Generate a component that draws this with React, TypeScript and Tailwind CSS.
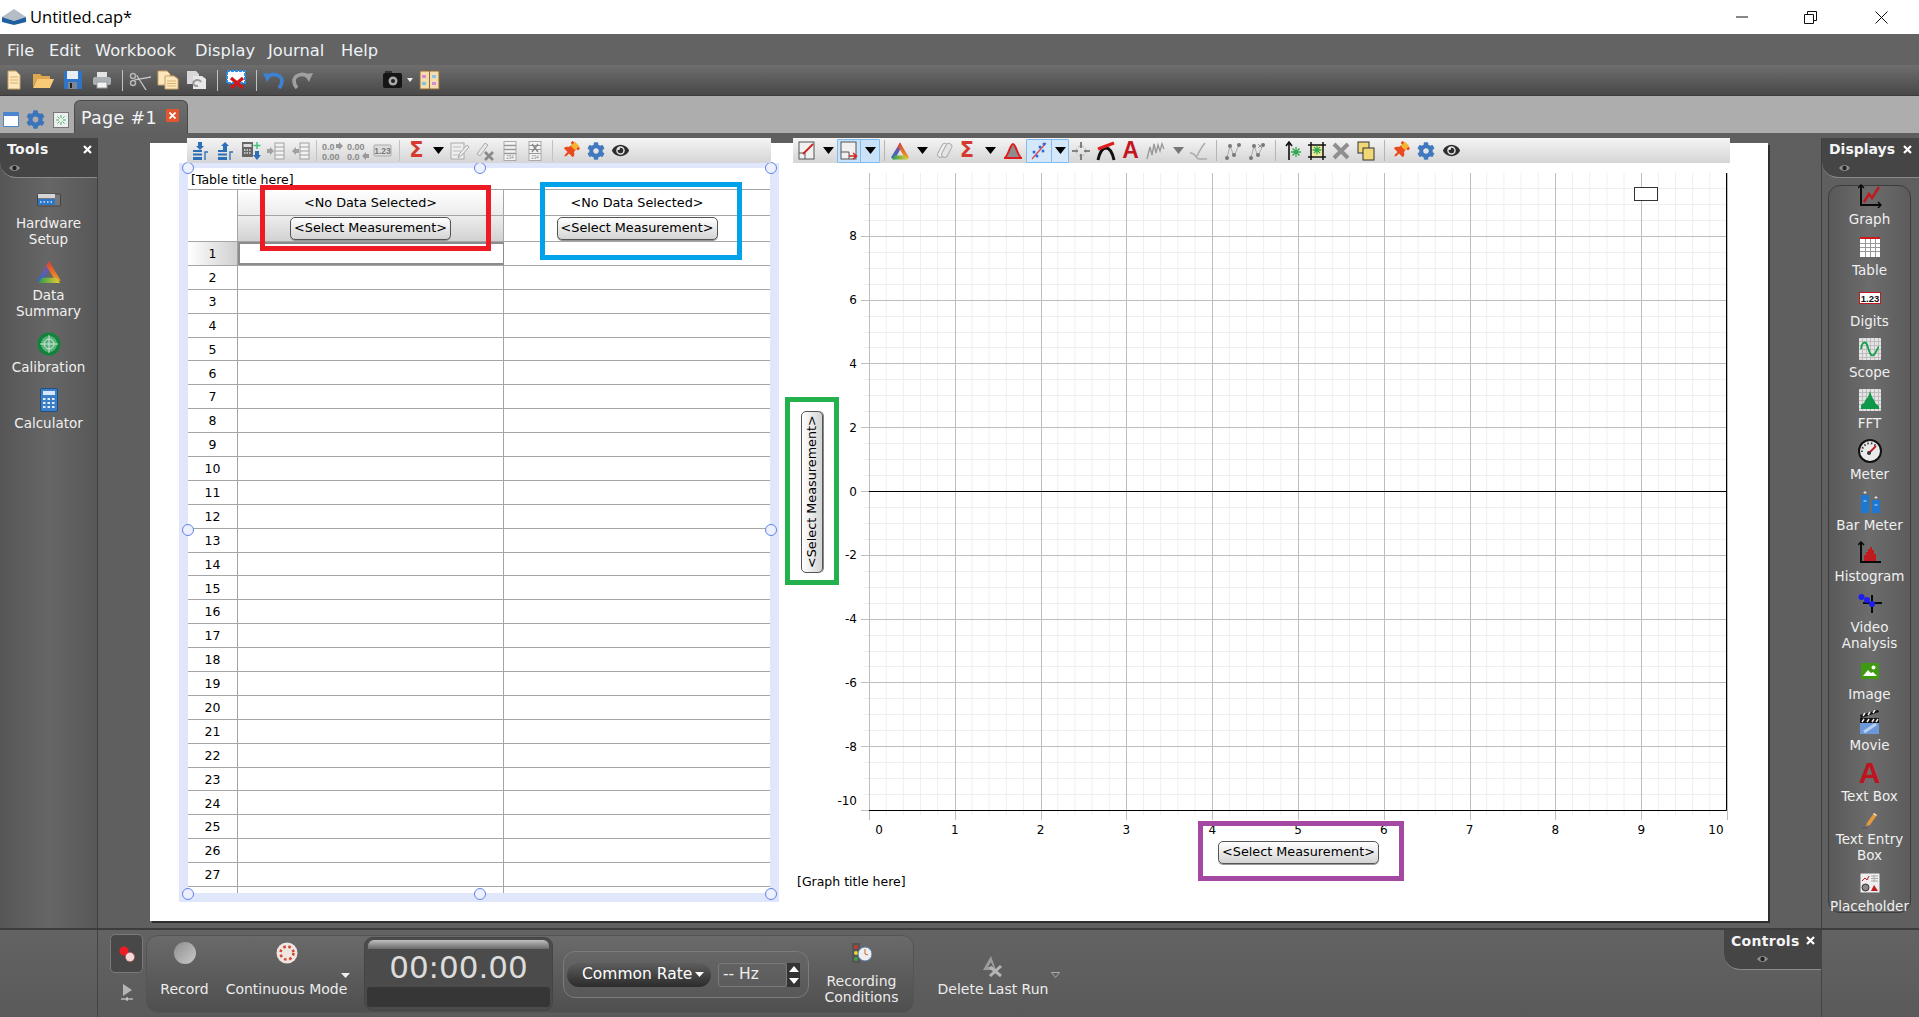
import React from "react";
import { FaCog, FaThumbtack, FaEye } from "react-icons/fa";

const ui = "font-['DejaVu_Sans',sans-serif]";

function Sv({ w = 20, h = 20, children }: { w?: number; h?: number; children?: React.ReactNode }) {
  return (
    <svg width={w} height={h} viewBox={`0 0 ${w} ${h}`} className="block shrink-0">
      {children}
    </svg>
  );
}

function Cell({ w, children, cls = "" }: { w: string; children?: React.ReactNode; cls?: string }) {
  return <div className={`flex h-full shrink-0 items-center justify-center ${w} ${cls}`}>{children}</div>;
}

const Sep = ({ w, dark }: { w: string; dark?: boolean }) => (
  <div className={`flex h-full shrink-0 items-center justify-center ${w}`}>
    <div className={`h-[21px] w-px ${dark ? "bg-[#b5b5b5]" : "bg-[#c2c2c2]"}`} />
  </div>
);

const Tri = ({ c = "#000", w = 11, h = 7 }: { c?: string; w?: number; h?: number }) => (
  <svg width={w} height={h} viewBox={`0 0 ${w} ${h}`} className="block shrink-0">
    <path d={`M0 0H${w}L${w / 2} ${h}Z`} fill={c} />
  </svg>
);

/* ---------- main toolbar icons ---------- */
const DocI = () => (
  <Sv>
    <path d="M4 1h8l4 4v14H4z" fill="#fde6ba" stroke="#c7a36a" />
    <path d="M6 7h8M6 10h8M6 13h8" stroke="#d9b071" />
  </Sv>
);
const FolderI = () => (
  <Sv w={23}>
    <path d="M1 4h7l2 2h8v3H5L1 17z" fill="#e0a84e" />
    <path d="M5 9h17l-4 9H1z" fill="#f9ca75" />
  </Sv>
);
const SaveI = () => (
  <Sv>
    <rect x="1" y="1" width="18" height="18" rx="1" fill="#2f74c6" />
    <rect x="4" y="1" width="11" height="8" fill="#e8eef6" />
    <rect x="5" y="12" width="9" height="7" fill="#7d8794" />
    <rect x="7" y="13" width="2" height="5" fill="#222" />
  </Sv>
);
const PrinterI = () => (
  <Sv>
    <rect x="5" y="2" width="10" height="6" fill="#e4e4e4" />
    <rect x="1" y="7" width="18" height="8" rx="2" fill="#aab0b6" />
    <rect x="5" y="12" width="10" height="6" fill="#f3f3f3" stroke="#999" />
  </Sv>
);
const ScissorsI = () => (
  <Sv w={22}>
    <circle cx="4" cy="6" r="2.500" fill="none" stroke="#b5b5b5" strokeWidth="1.500" />
    <circle cx="4" cy="13" r="2.500" fill="none" stroke="#b5b5b5" strokeWidth="1.500" />
    <path d="M6 7l15 10M6 12L21 2" stroke="#c5c5c5" strokeWidth="1.300" transform="rotate(24 11 10)" />
  </Sv>
);
const CopyI = () => (
  <Sv w={22}>
    <path d="M1 1h9l3 3v11H1z" fill="#fde6ba" stroke="#c7a36a" />
    <path d="M8 6h9l4 3v10H8z" fill="#fde6ba" stroke="#c7a36a" />
    <path d="M10 11h9M10 13.500h9M10 16h9" stroke="#d9b071" />
  </Sv>
);
const PasteI = () => (
  <Sv w={22}>
    <path d="M1 1h9l3 3v10H1z" fill="#d8d8d8" />
    <path d="M7 6h9l4 3v10H7z" fill="#e8e8e8" />
    <path d="M15 12a4 3 0 1 0-3 4" fill="none" stroke="#999" strokeWidth="2" />
  </Sv>
);
const DelChartI = () => (
  <Sv w={21}>
    <rect x="1" y="1" width="18" height="12" fill="#fff" stroke="#2a8ee8" strokeWidth="2" strokeDasharray="3 1" />
    <path d="M5 8l12 10M17 8L5 18" stroke="#d0181c" strokeWidth="3.400" />
  </Sv>
);
const UndoI = ({ c = "#3f82d4", flip = false }: { c?: string; flip?: boolean }) => (
  <Sv w={21}>
    <g transform={flip ? "translate(21 0) scale(-1 1)" : undefined}>
      <path d="M5 7a8 7 0 0 1 14 3c0 3-1 6-3 8" fill="none" stroke={c} strokeWidth="3.600" />
      <path d="M0 3l9 1-5 8z" fill={c} />
    </g>
  </Sv>
);
const CameraI = () => (
  <Sv w={21}>
    <rect x="3" y="1" width="7" height="4" fill="#333" />
    <rect x="1" y="3" width="19" height="15" rx="2" fill="#151515" />
    <circle cx="11" cy="11" r="4.500" fill="#a8a8a8" />
    <circle cx="11" cy="11" r="2" fill="#222" />
  </Sv>
);
const BookI = () => (
  <Sv w={21}>
    <rect x="1" y="1" width="19" height="18" fill="#f3dcae" stroke="#8d6a38" />
    <path d="M10.500 1v18" stroke="#8d6a38" />
    <rect x="3" y="5" width="4" height="3" fill="#d98ad0" />
    <rect x="13" y="5" width="4" height="3" fill="#8fc4e8" />
    <rect x="3" y="12" width="4" height="3" fill="#7cc4d8" />
    <rect x="13" y="12" width="4" height="3" fill="#d98ad0" />
  </Sv>
);

/* ---------- table toolbar icons ---------- */
const ColAdd = ({ up = false }: { up?: boolean }) => {
  const c = "#2a6fb8";
  return (
    <Sv>
      <g transform="translate(-1 0)">
        <path d={up ? "M10 1l4 4h-2v4H8V5H6z" : "M8 1h4v4h2l-4 4-4-4h2z"} fill={c} />
        <rect x="3" y="9" width="9" height="2" fill={c} />
        <rect x="3" y="12.500" width="9" height="2" fill={c} />
        <rect x="3" y="16" width="9" height="3" fill={c} />
        <path d="M15 19v-8h3" fill="none" stroke={c} strokeWidth="1.300" />
      </g>
    </Sv>
  );
};
const CalcAdd = () => (
  <Sv>
    <rect x="1" y="1" width="11" height="15" fill="#666" />
    <rect x="2.500" y="3" width="8" height="3" fill="#ddd" />
    <path d="M3 9h7M3 12h7" stroke="#ddd" strokeDasharray="1.500 1" strokeWidth="1.600" />
    <path d="M16 1v7M12.500 4.500h7" stroke="#3fc47a" strokeWidth="1.500" />
    <path d="M14 10h4v4h2l-4 5-4-5h2z" fill="#2a6fb8" />
  </Sv>
);
const RowMove = ({ left = false }: { left?: boolean }) => (
  <Sv>
    <rect x="9" y="2" width="9" height="16" fill="#f2f2f2" stroke="#a0a0a0" />
    <path d="M9 6h9M9 10h9M9 14h9" stroke="#a0a0a0" />
    <path d={left ? "M1 10l4-4v2h3v4H5v2z" : "M8 10L4 6v2H1v4h3v2z"} fill="#a0a0a0" />
  </Sv>
);
const Dec = ({ a, b, arrow }: { a: string; b: string; arrow: "r" | "l" }) => (
  <Sv w={24}>
    <text x="1" y="9" fontSize="9" fontWeight="700" fill="#8a8a8a" fontFamily="Liberation Sans, sans-serif">{a}</text>
    <text x="1" y="19" fontSize="9" fontWeight="700" fill="#8a8a8a" fontFamily="Liberation Sans, sans-serif">{b}</text>
    <path d={arrow === "r" ? "M15 2v4h3v2l4-4-4-4v2z" : "M23 12v4h-3v2l-4-4 4-4v2z"} fill="#999" transform="translate(0 1)" />
  </Sv>
);
const Num123 = () => (
  <Sv w={19}>
    <rect x="1" y="4" width="17" height="11" rx="1" fill="#ddd" stroke="#aaa" />
    <text x="9.500" y="13" textAnchor="middle" fontSize="8.500" fontWeight="700" fill="#777" fontFamily="Liberation Sans, sans-serif">1.23</text>
  </Sv>
);
const Sigma = ({ size = "text-[21px]" }: { size?: string }) => (
  <span className={`font-['DejaVu_Sans',sans-serif] font-bold leading-none text-[#d33a30] ${size}`}>Σ</span>
);
const EditI = () => (
  <Sv>
    <rect x="1" y="2" width="13" height="16" fill="#eee" stroke="#aaa" />
    <path d="M3 6h8M3 10h8M3 14h8" stroke="#bbb" />
    <path d="M8 17l2-5 7-8 2 2-7 8z" fill="#eee" stroke="#aaa" />
  </Sv>
);
const EraseI = () => (
  <Sv>
    <path d="M2 13l8-11 3 2-8 11z" fill="#e6e6e6" stroke="#aaa" />
    <path d="M10 11l8 8M18 11l-8 8" stroke="#888" strokeWidth="2.600" />
  </Sv>
);
const ColI = ({ x = false }: { x?: boolean }) => (
  <Sv w={14}>
    <rect x="1" y="0.500" width="12" height="19" fill="#f4f4f4" stroke="#aaa" />
    <path d="M1 4.500h12M1 8.500h12M1 12.500h12" stroke="#999" strokeWidth={x ? 1 : 1.4} />
    {x ? <path d="M4 3l6 8M10 3l-6 8" stroke="#888" strokeWidth="1.500" /> : null}
    <text x="7" y="18" textAnchor="middle" fontSize="4.500" fill="#888" fontFamily="Liberation Sans, sans-serif">234</text>
  </Sv>
);
const PinI = () => (
  <span className="relative block h-[18px] w-[18px]">
    <FaThumbtack className="rotate-45 text-[#ea4a20]" size={17} />
    <span className="absolute right-[2px] top-[1px] h-[6px] w-[6px] rotate-45 bg-[#f6b430]" />
  </span>
);
const GearI = () => <FaCog className="text-[#4079bf]" size={18} />;
const EyeI = () => <FaEye className="text-[#2d2d2d]" size={17} />;

/* ---------- graph toolbar icons ---------- */
const GBox = ({ arrow }: { arrow?: boolean }) => (
  <Sv>
    <rect x="2" y="1" width="15" height="17" fill="#f0f0f0" stroke="#555" />
    {arrow ? (
      <>
        <path d="M2 11h8v7" fill="none" stroke="#555" />
        <path d="M10 15h7M14 12l3.500 3-3.500 3" fill="none" stroke="#d0211c" strokeWidth="1.500" />
      </>
    ) : (
      <>
        <path d="M2 12h6v6" fill="none" stroke="#555" />
        <path d="M6 13L16 3" stroke="#d0211c" strokeWidth="1.800" />
      </>
    )}
  </Sv>
);
const TriColor = ({ s = 20 }: { s?: number }) => (
  <svg width={s} height={s} viewBox="0 0 20 20" className="block shrink-0">
    <defs>
      <linearGradient id="triL" x1="0" y1="1" x2="0" y2="0">
        <stop offset="0" stopColor="#1f6fc8" />
        <stop offset="1" stopColor="#a04a8c" />
      </linearGradient>
      <linearGradient id="triR" x1="0" y1="0" x2="0" y2="1">
        <stop offset="0" stopColor="#d8402f" />
        <stop offset="1" stopColor="#f0a028" />
      </linearGradient>
      <linearGradient id="triB" x1="0" y1="0" x2="1" y2="0">
        <stop offset="0" stopColor="#2a9a50" />
        <stop offset="1" stopColor="#e8d030" />
      </linearGradient>
    </defs>
    <path d="M10 1.500L1 16.500 4.500 18.500 12 5.500z" fill="url(#triL)" />
    <path d="M8 5L10 1.500 19 16.500 15.500 18 z" fill="url(#triR)" />
    <path d="M2 18.500l2.500-4h11l3 4z" fill="url(#triB)" />
  </svg>
);
const OvalsI = () => (
  <Sv>
    <rect x="6" y="2" width="6" height="15" rx="3" fill="#eee" stroke="#aaa" transform="rotate(28 9 9)" />
    <rect x="10" y="2" width="6" height="15" rx="3" fill="#e4e4e4" stroke="#aaa" transform="rotate(28 13 9)" />
  </Sv>
);
const PeakI = () => (
  <Sv>
    <path d="M1 17C5 17 7 3 10 3s5 14 9 14z" fill="#8d8d8d" stroke="#e01b1b" strokeWidth="2" />
  </Sv>
);
const ScatterI = () => (
  <Sv>
    <path d="M3 18L17 2" stroke="#d94b4b" strokeWidth="1.300" />
    <circle cx="5" cy="11" r="1.500" fill="#2c6be0" />
    <circle cx="8" cy="15" r="1.500" fill="#2c6be0" />
    <circle cx="11" cy="6" r="1.500" fill="#2c6be0" />
    <circle cx="14" cy="10" r="1.500" fill="#2c6be0" />
    <circle cx="15" cy="3" r="1.500" fill="#2c6be0" />
  </Sv>
);
const CrossI = () => (
  <Sv>
    <circle cx="10" cy="10" r="5" fill="none" stroke="#aaa" strokeDasharray="2 2" />
    <path d="M10 1v6M10 13v6M1 10h6M13 10h6" stroke="#666" strokeWidth="1.600" />
  </Sv>
);
const ArchI = () => (
  <Sv>
    <path d="M2 19C4 10 7 7 10 7s6 3 8 12" fill="none" stroke="#111" strokeWidth="3" />
    <path d="M2 8L18 2" stroke="#e01b1b" strokeWidth="3" />
  </Sv>
);
const BigA = () => <span className="font-['Liberation_Sans',sans-serif] text-[23px] font-bold leading-none text-[#c4161e]">A</span>;
const NoiseI = () => (
  <Sv>
    <path d="M1 18L4 6l2 8 2-11 2 9 2-8 2 6 2-7 2 5" fill="none" stroke="#9a9a9a" strokeWidth="1.400" />
  </Sv>
);
const CurveI = () => (
  <Sv>
    <path d="M1 12c6 0 6 6 9 6h8M8 15c2-4 5-10 8-13" fill="none" stroke="#aaa" strokeWidth="1.500" />
  </Sv>
);
const PointsI = ({ x = false }: { x?: boolean }) => (
  <Sv>
    <path d="M4 17L7 5l4 10 5-11" fill="none" stroke="#aaa" />
    <circle cx="4" cy="17" r="2" fill="#777" />
    <circle cx="7" cy="5" r="2" fill="#777" />
    <circle cx="11" cy="14" r="2" fill="#777" />
    <circle cx="16" cy="4" r="2" fill="#777" />
    {x ? <path d="M11 3l4 4M15 3l-4 4" stroke="#999" /> : null}
  </Sv>
);
const Star = ({ x, y, r = 4 }: { x: number; y: number; r?: number }) => (
  <path
    d={`M${x - r} ${y}h${2 * r}M${x} ${y - r}v${2 * r}M${x - r * 0.7} ${y - r * 0.7}l${r * 1.4} ${r * 1.4}M${x + r * 0.7} ${y - r * 0.7}l${-r * 1.4} ${r * 1.4}`}
    stroke="#2da84f"
    strokeWidth="1.300"
  />
);
const AxisStar = () => (
  <Sv>
    <path d="M6 19V2M3 5l3-4 3 4" fill="none" stroke="#111" strokeWidth="1.600" />
    <Star x={13} y={11} r={5} />
  </Sv>
);
const CropStar = () => (
  <Sv>
    <rect x="4" y="4" width="13" height="12" fill="#f3e9a0" />
    <path d="M4 1v18M1 16h18M1 4h18M16 1v18" stroke="#111" strokeWidth="1.500" />
    <Star x={10} y={9} r={4.5} />
  </Sv>
);
const BigX = () => (
  <Sv>
    <path d="M3 3l14 14M17 3L3 17" stroke="#8f8f8f" strokeWidth="4" />
  </Sv>
);
const Squares = () => (
  <Sv>
    <rect x="2" y="1" width="11" height="11" fill="#f2d777" stroke="#333" />
    <rect x="7" y="7" width="11" height="12" fill="#f2d777" stroke="#333" />
  </Sv>
);

/* ---------- side panel icons ---------- */
const HwI = () => (
  <Sv w={24} h={14}>
    <rect x="0.500" y="1" width="23" height="12" rx="1" fill="#777" stroke="#444" />
    <rect x="1" y="1" width="17" height="4" fill="#d5d5d5" />
    <rect x="1" y="6" width="17" height="6" fill="#2b78c6" />
    <path d="M3 9h13" stroke="#cfe6ff" strokeWidth="1.500" strokeDasharray="1.500 2" />
  </Sv>
);
const CalibI = () => (
  <Sv w={24} h={24}>
    <circle cx="12" cy="12" r="11.500" fill="#11843b" />
    <circle cx="12" cy="12" r="8" fill="#5bb27c" />
    <circle cx="12" cy="12" r="5" fill="none" stroke="#d0e8d8" />
    <path d="M12 3v18M3 12h18" stroke="#cfe6d6" />
  </Sv>
);
const CalcI = () => (
  <Sv w={18} h={24}>
    <rect x="0.500" y="0.500" width="17" height="23" rx="1.500" fill="#3b7fc8" stroke="#234e80" />
    <rect x="3" y="3" width="12" height="4" fill="#d8e8f8" />
    <path d="M3 11h12M3 15h12M3 19h12" stroke="#e3eefa" strokeWidth="2" strokeDasharray="2.500 2" />
  </Sv>
);
const GraphI = () => (
  <Sv w={24} h={24}>
    <path d="M3 1v20h20" fill="none" stroke="#0a0a0a" strokeWidth="2" />
    <path d="M0 4l3-3 3 3M20 18l3 3-3 3" fill="none" stroke="#0a0a0a" strokeWidth="1.500" />
    <path d="M6 18l5-8 3 4 7-11" fill="none" stroke="#c01a1f" strokeWidth="2.500" />
  </Sv>
);
const TableI = () => (
  <Sv w={20} h={20}>
    <rect width="20" height="20" fill="#fff" />
    <path d="M0 1h20" stroke="#d0181c" strokeWidth="2" />
    <path d="M0 6.500h20M0 10.500h20M0 14.500h20M5.500 2v18M10.500 2v18M15.500 2v18" stroke="#999" />
  </Sv>
);
const DigitsI = () => (
  <Sv w={22} h={12}>
    <rect x="0.500" y="0.500" width="21" height="11" fill="#fff" stroke="#c01a1f" />
    <text x="11" y="9.500" textAnchor="middle" fontSize="9.500" fontWeight="700" fill="#111" fontFamily="Liberation Sans, sans-serif">1.23</text>
  </Sv>
);
const GridBg = () => (
  <>
    <rect width="22" height="22" rx="1" fill="#e4e4e4" />
    <path d="M3.500 0v22M7.500 0v22M11.500 0v22M15.500 0v22M19.500 0v22M0 3.500h22M0 7.500h22M0 11.500h22M0 15.500h22M0 19.500h22" stroke="#bdbdbd" />
  </>
);
const ScopeI = () => (
  <Sv w={22} h={22}>
    <GridBg />
    <path d="M2 11C3 3 7 3 8.500 8s3 11 6 9 4-8 5.500-8" fill="none" stroke="#12a04a" strokeWidth="1.800" />
  </Sv>
);
const FftI = () => (
  <Sv w={22} h={22}>
    <GridBg />
    <path d="M2 20v-4l3-2 2-4 2-2 2-6 2 6 2 3 2 4 3 2v3z" fill="#10984a" />
  </Sv>
);
const MeterI = () => (
  <Sv w={24} h={24}>
    <circle cx="12" cy="12" r="11" fill="#eaeaea" stroke="#111" strokeWidth="2" />
    <path d="M4 13a8 8 0 0 1 14-6" fill="none" stroke="#444" strokeDasharray="1.500 2" strokeWidth="2" />
    <path d="M11 14l7-7" stroke="#c01a1f" strokeWidth="1.800" />
    <circle cx="11" cy="14" r="2" fill="#333" />
  </Sv>
);
const BarI = () => (
  <Sv w={20} h={24}>
    <rect x="1" y="5" width="8" height="18" fill="#1d78d4" />
    <rect x="12" y="10" width="8" height="13" fill="#1d78d4" />
    <path d="M5 1v3M3.500 2.500h3M16 6v3M14.500 7.500h3M3.500 11h3M14.500 15h3" stroke="#ddd" />
  </Sv>
);
const HistI = () => (
  <Sv w={24} h={24}>
    <path d="M3 1v20h20" fill="none" stroke="#0a0a0a" strokeWidth="2" />
    <path d="M0 4l3-3 3 3" fill="none" stroke="#0a0a0a" strokeWidth="1.500" />
    <path d="M6 20v-6h2v-3h2V8h2V6h2v3h2v4h2v7z" fill="#c01a1f" />
  </Sv>
);
const VideoI = () => (
  <Sv w={24} h={22}>
    <path d="M14 2v18M5 10h19" stroke="#0a0a0a" strokeWidth="2" />
    <circle cx="3.500" cy="4" r="3" fill="#1d1df0" />
    <circle cx="9" cy="7" r="3" fill="#1d1df0" />
    <circle cx="14" cy="11" r="3" fill="#1d1df0" />
  </Sv>
);
const ImageI = () => (
  <Sv w={18} h={16}>
    <rect width="18" height="16" rx="1" fill="#3f9a12" />
    <circle cx="12.500" cy="4.500" r="2" fill="#fff" />
    <path d="M2 13l5-6 3 3 2-1 4 4z" fill="#fff" />
  </Sv>
);
const MovieI = () => (
  <Sv w={20} h={24}>
    <path d="M1 8l18-6-1-2L0 5z" fill="#111" />
    <path d="M3 6l2-3M8 5l2-3M13 3l2-3" stroke="#eee" strokeWidth="1.500" />
    <rect y="8" width="19" height="5" fill="#111" />
    <path d="M2 12l2-3M7 12l2-3M12 12l2-3M16 12l2-3" stroke="#eee" strokeWidth="1.500" />
    <rect y="13" width="19" height="11" fill="#6b98d8" />
    <path d="M4 22L16 14" stroke="#b8cff0" strokeWidth="3" />
  </Sv>
);
const PencilI = () => (
  <Sv w={16} h={17}>
    <path d="M5 11l7-10 3 2-7 10-4 1z" fill="#e69a3c" />
    <path d="M12 1l3 2-1 1-3-2z" fill="#ddd" />
    <path d="M0 16h6" stroke="#555" />
  </Sv>
);
const PlaceI = () => (
  <Sv w={20} h={20}>
    <rect width="20" height="20" rx="1" fill="#eee" stroke="#666" />
    <path d="M2 8l3-3 2 2 2-4" fill="none" stroke="#b01a1f" />
    <path d="M11 3h7M11 5.500h7M11 8h7M14 2v7" stroke="#aaa" />
    <circle cx="5.500" cy="14.500" r="3.500" fill="#888" stroke="#333" />
    <path d="M11 18l3-6 2 3 2 3z" fill="#c01a1f" />
  </Sv>
);
const SmallEye = () => (
  <svg width="11" height="6" viewBox="0 0 11 6" className="block">
    <path d="M0 3c3-4 8-4 11 0-3 4-8 4-11 0z" fill="#8f8f8f" />
    <circle cx="5.500" cy="3" r="2.200" fill="#222" />
  </svg>
);
const Xmark = () => (
  <svg width="9" height="9" viewBox="0 0 9 9" className="block">
    <path d="M1 1l7 7M8 1L1 8" stroke="#fff" strokeWidth="2.200" />
  </svg>
);

/* ---------- shared pieces ---------- */
function PanelHead({ title, eye, x, track = "tracking-[0.3px]" }: { title: string; eye: string; x: string; track?: string }) {
  return (
    <div className="relative h-[40px] shrink-0 rounded-bl-[16px] border-b border-[#8a8a8a] bg-[#454545]">
      <div className={`absolute left-[7px] top-[2px] text-[14px] font-bold leading-[18px] text-[#f4f4f4] ${track} ${ui}`}>{title}</div>
      <div className={`absolute top-[7px] ${x}`}>
        <Xmark />
      </div>
      <div className={`absolute top-[27px] ${eye}`}>
        <SmallEye />
      </div>
    </div>
  );
}

function Item({ icon, lines, tight }: { icon: React.ReactNode; lines: string[]; tight?: boolean }) {
  return (
    <div className="flex flex-col items-center">
      <div className={`mt-[5px] flex items-center justify-center ${tight ? "h-[22px]" : "h-[30px]"}`}>{icon}</div>
      {lines.map((l) => (
        <div key={l} className={`h-[16px] whitespace-nowrap text-center text-[13.5px] leading-[16px] text-[#f0f0f0] ${ui}`}>
          {l}
        </div>
      ))}
    </div>
  );
}

function SelectBtn() {
  return (
    <button className={`flex h-[23px] w-[161px] items-center justify-center whitespace-nowrap rounded-[5px] border border-[#555] bg-gradient-to-b from-white to-[#d4d4d4] text-[12.8px] leading-none text-black shadow-[0_1px_0_#999] ${ui}`}>
      {"<Select Measurement>"}
    </button>
  );
}

const Handle = ({ cls }: { cls: string }) => (
  <div className={`absolute h-[12px] w-[12px] rounded-full border border-[#5f83ea] bg-[#eef1fd] ${cls}`} />
);

function Annot({ cls }: { cls: string }) {
  return <div className={`pointer-events-none absolute border-[5px] ${cls}`} />;
}

const rows = Array.from({ length: 28 }, (_, i) => i + 1);

function TablePane() {
  return (
    <div className="-mt-[5px] flex w-[600px] shrink-0 flex-col">
      <div className="z-10 ml-[8px] flex h-[25px] w-[584px] items-center bg-gradient-to-b from-[#f4f4f4] to-[#d5d5d5] pl-px">
        <Cell w="w-[25px]"><ColAdd /></Cell>
        <Cell w="w-[25px]"><ColAdd up /></Cell>
        <Cell w="w-[25px]"><CalcAdd /></Cell>
        <Cell w="w-[25px]"><RowMove /></Cell>
        <Cell w="w-[25px]"><RowMove left /></Cell>
        <Sep w="w-[7px]" />
        <Cell w="w-[25px]"><Dec a="0.0" b="0.00" arrow="r" /></Cell>
        <Cell w="w-[25px]"><Dec a="0.00" b="0.0" arrow="l" /></Cell>
        <Cell w="w-[25px]"><Num123 /></Cell>
        <Sep w="w-[9px]" />
        <Cell w="w-[25px]"><Sigma /></Cell>
        <Cell w="w-[18px]"><Tri /></Cell>
        <Cell w="w-[25px]"><EditI /></Cell>
        <Cell w="w-[25px]"><EraseI /></Cell>
        <Cell w="w-[25px]"><ColI /></Cell>
        <Cell w="w-[25px]"><ColI x /></Cell>
        <Sep w="w-[11px]" />
        <Cell w="w-[25px]"><PinI /></Cell>
        <Cell w="w-[25px]"><GearI /></Cell>
        <Cell w="w-[25px]"><EyeI /></Cell>
      </div>
      <div className="relative h-[739px] bg-[#e0e6fb] px-[9px] pb-[9px] pt-[5px]">
        <Handle cls="left-[3px] top-[-1px]" />
        <Handle cls="left-[295px] top-[-1px]" />
        <Handle cls="left-[586px] top-[-1px]" />
        <Handle cls="left-[3px] top-[361px]" />
        <Handle cls="left-[586px] top-[361px]" />
        <Handle cls="left-[3px] top-[725px]" />
        <Handle cls="left-[295px] top-[725px]" />
        <Handle cls="left-[586px] top-[725px]" />
        <div className="flex h-full flex-col overflow-hidden bg-white">
          <div className={`h-[21px] shrink-0 pl-[3px] pt-px text-[12.5px] leading-[21px] text-black ${ui}`}>[Table title here]</div>
          <div className={`grid shrink-0 grid-cols-[50px_266px_266px] border-t border-[#a5a5a5] text-[12.8px] text-black ${ui}`}>
            <div className="row-span-2 border-b border-r border-[#a5a5a5]" />
            <div className="flex h-[26px] items-center justify-center border-b border-r border-[#a5a5a5] bg-gradient-to-b from-white to-[#ebebeb]">{"<No Data Selected>"}</div>
            <div className="flex h-[26px] items-center justify-center border-b border-[#a5a5a5]">{"<No Data Selected>"}</div>
            <div className="flex h-[26px] items-center justify-center border-b border-r border-[#a5a5a5] bg-gradient-to-b from-[#ededed] to-[#d2d2d2]"><SelectBtn /></div>
            <div className="flex h-[26px] items-center justify-center border-b border-[#a5a5a5]"><SelectBtn /></div>
          </div>
          {rows.map((n) => (
            <div key={n} className={`grid h-[23.9px] shrink-0 grid-cols-[50px_266px_266px] border-b border-[#a5a5a5] text-[12.5px] text-black ${ui}`}>
              <div className={`flex items-center justify-center border-r border-[#a5a5a5] pt-[2px] ${n === 1 ? "bg-gradient-to-r from-white to-[#d0d0d0]" : ""}`}>{n < 28 ? n : ""}</div>
              <div className={`border-r ${n === 1 ? "border-[2px] border-[#8c8c8c]" : "border-[#a5a5a5]"}`} />
              <div />
            </div>
          ))}
        </div>
      </div>
    </div>
  );
}

function Chart() {
  const xs = Array.from({ length: 11 }, (_, i) => 869 + i * 85.8);
  const minorX: number[] = [];
  for (let i = 0; i < 50; i++) if (i % 5) minorX.push(869 + i * 17.16);
  const y0 = 491;
  const ys = [-10, -8, -6, -4, -2, 0, 2, 4, 6, 8];
  const py = (v: number) => y0 - v * 31.9;
  const minorY: number[] = [];
  for (let v = -9.5; v < 9.6; v += 0.5) if (Math.round(v * 2) % 4 !== 0) minorY.push(py(v));
  const f = "DejaVu Sans, sans-serif";
  return (
    <svg width="906" height="675" viewBox="824 163 906 675" className="block shrink-0">
      {minorX.map((x) => (
        <path key={x} d={`M${x} 173V810M${x} 810v5`} stroke="#efefef" strokeWidth="1" />
      ))}
      {minorY.map((y) => (
        <path key={y} d={`M864 ${Math.round(y) + 0.5}H1726`} stroke="#efefef" strokeWidth="1" />
      ))}
      {xs.map((x, i) => (
        <path key={i} d={`M${Math.round(x) + 0.5} 173V820`} stroke="#bdbdbd" strokeWidth="1" />
      ))}
      {ys.map((v) => (
        <path key={v} d={`M861 ${Math.round(py(v)) + 0.5}H1726`} stroke="#bdbdbd" strokeWidth="1" />
      ))}
      <path d="M1726.500 173V810.500H869" fill="none" stroke="#000" strokeWidth="1" />
      <path d="M869 491.500H1726" stroke="#000" strokeWidth="1" />
      <rect x="1634.500" y="187.500" width="23" height="13" fill="#fff" stroke="#333" />
      {ys.map((v) => (
        <text key={v} x="857" y={(v === -10 ? 800 : py(v)) + 4.5} textAnchor="end" fontSize="12" fill="#000" fontFamily={f}>
          {v}
        </text>
      ))}
      {xs.map((x, i) => (
        <text key={i} x={i === 0 ? 879 : i === 10 ? 1716 : x} y="834" textAnchor="middle" fontSize="12" fill="#000" fontFamily={f}>
          {i}
        </text>
      ))}
    </svg>
  );
}

function GraphPane() {
  return (
    <div className="-mt-[5px] ml-[14px] flex w-[937px] shrink-0 flex-col">
      <div className="flex h-[25px] items-center bg-gradient-to-b from-[#f4f4f4] to-[#d5d5d5] pl-[2px]">
        <Cell w="w-[24px]"><GBox /></Cell>
        <Cell w="w-[18px]"><Tri /></Cell>
        <div className="flex h-[24px] items-center rounded-[1px] border border-[#80bcf0] bg-[#c9e2f8]">
          <Cell w="w-[23px]" cls="border-r border-[#80bcf0]"><GBox arrow /></Cell>
          <Cell w="w-[18px]"><Tri /></Cell>
        </div>
        <Sep w="w-[8px]" dark />
        <Cell w="w-[24px]"><TriColor /></Cell>
        <Cell w="w-[20px]"><Tri /></Cell>
        <Cell w="w-[23px]"><OvalsI /></Cell>
        <Cell w="w-[24px]"><Sigma /></Cell>
        <Cell w="w-[22px]"><Tri /></Cell>
        <Cell w="w-[24px]"><PeakI /></Cell>
        <div className="ml-px flex h-[24px] items-center rounded-[1px] border border-[#80bcf0] bg-[#d5e8fa]">
          <Cell w="w-[25px]" cls="border-r border-[#80bcf0]"><ScatterI /></Cell>
          <Cell w="w-[16px]"><Tri /></Cell>
        </div>
        <Cell w="w-[24px]"><CrossI /></Cell>
        <Cell w="w-[26px]"><ArchI /></Cell>
        <Cell w="w-[23px]"><BigA /></Cell>
        <Cell w="w-[27px]"><NoiseI /></Cell>
        <Cell w="w-[18px]"><Tri c="#777" /></Cell>
        <Cell w="w-[24px]"><CurveI /></Cell>
        <Sep w="w-[10px]" dark />
        <Cell w="w-[23px]"><PointsI /></Cell>
        <Cell w="w-[25px]"><PointsI x /></Cell>
        <Sep w="w-[13px]" dark />
        <Cell w="w-[22px]"><AxisStar /></Cell>
        <Cell w="w-[25px]"><CropStar /></Cell>
        <Cell w="w-[24px]"><BigX /></Cell>
        <Cell w="w-[26px]"><Squares /></Cell>
        <Sep w="w-[10px]" dark />
        <Cell w="w-[24px]"><PinI /></Cell>
        <Cell w="w-[26px]"><GearI /></Cell>
        <Cell w="w-[24px]"><EyeI /></Cell>
      </div>
      <div className="flex">
        <div className="w-[31px] shrink-0 pl-[8px] pt-[248px]">
          <button className={`flex h-[162px] w-[22px] rotate-180 items-center justify-center whitespace-nowrap rounded-[5px] border border-[#555] bg-gradient-to-l from-white to-[#d4d4d4] text-[12.8px] leading-none text-black shadow-[-1px_0_0_#888] [writing-mode:vertical-rl] ${ui}`}>
            {"<Select Measurement>"}
          </button>
        </div>
        <Chart />
      </div>
      <div className="ml-[425px] mt-[3px]">
        <SelectBtn />
      </div>
      <div className={`ml-[4px] mt-[10px] text-[12.5px] leading-[16px] text-black ${ui}`}>[Graph title here]</div>
    </div>
  );
}

function MainToolbar() {
  return (
    <div className="flex h-[31px] shrink-0 items-center border-b border-[#3c3c3c] bg-gradient-to-b from-[#6e6e6e] to-[#484848]">
      <Cell w="w-[28px]"><DocI /></Cell>
      <Cell w="w-[30px]"><FolderI /></Cell>
      <Cell w="w-[29px]"><SaveI /></Cell>
      <Cell w="w-[30px]"><PrinterI /></Cell>
      <Sep w="w-[10px]" />
      <Cell w="w-[26px]"><ScissorsI /></Cell>
      <Cell w="w-[29px]"><CopyI /></Cell>
      <Cell w="w-[30px]"><PasteI /></Cell>
      <Sep w="w-[10px]" />
      <Cell w="w-[28px]"><DelChartI /></Cell>
      <Sep w="w-[12px]" />
      <Cell w="w-[22px]"><UndoI /></Cell>
      <Cell w="w-[36px]"><UndoI c="#a0a0a0" flip /></Cell>
      <div className="w-[58px] shrink-0" />
      <Cell w="w-[28px]"><CameraI /></Cell>
      <Cell w="w-[8px]"><Tri c="#eee" w={6} h={4} /></Cell>
      <Cell w="w-[30px]"><BookI /></Cell>
    </div>
  );
}

export default function App() {
  return (
    <div className={`flex h-[1017px] w-[1919px] flex-col overflow-hidden bg-[#5f5f5f] ${ui}`}>
      {/* title bar */}
      <div className="flex h-[34px] shrink-0 items-center bg-white">
        <svg width="26" height="18" viewBox="0 0 26 18" className="ml-px mr-[3px] shrink-0">
          <path d="M1 9L13 1l12 8-12 4z" fill="#b4bcc6" />
          <path d="M1 9l12 4 12-4v5l-12 3-12-3z" fill="#1f5f9f" />
        </svg>
        <span className="font-['Open_Sans',sans-serif] text-[16.5px] leading-none text-black">Untitled.cap*</span>
        <div className="ml-auto flex h-full items-center">
          <svg width="12" height="2" viewBox="0 0 12 2" className="mr-[56px]"><path d="M0 1h12" stroke="#111" /></svg>
          <svg width="13" height="13" viewBox="0 0 13 13" className="mr-[58px]"><path d="M.5 3.500h9v9h-9zM3.500 3.500v-3h9v9h-3" fill="none" stroke="#111" /></svg>
          <svg width="13" height="13" viewBox="0 0 13 13" className="mr-[31px]"><path d="M.5.500l12 12M12.500.500l-12 12" stroke="#111" /></svg>
        </div>
      </div>
      {/* menu */}
      <div className="flex h-[31px] shrink-0 items-center bg-[#636363] pl-[7px] pt-[3px] text-[16.3px] leading-none text-[#eef2f6]">
        <span className="w-[42px]">File</span>
        <span className="w-[46px]">Edit</span>
        <span className="w-[100px]">Workbook</span>
        <span className="w-[73px]">Display</span>
        <span className="w-[73px]">Journal</span>
        <span>Help</span>
      </div>
      <MainToolbar />
      {/* tab bar */}
      <div className="flex h-[37px] shrink-0 items-end bg-[#adadad]">
        <div className="flex h-[33px] w-[74px] shrink-0 items-center pl-[3px] pt-[6px]">
          <svg width="16" height="15" viewBox="0 0 16 15" className="shrink-0">
            <rect width="16" height="15" rx="1" fill="#4a86d0" />
            <rect x="1" y="4" width="14" height="10" fill="#fff" />
          </svg>
          <FaCog className="ml-[7px] shrink-0 text-[#3c74ba]" size={19} />
          <svg width="16" height="16" viewBox="0 0 16 16" className="ml-[8px] shrink-0">
            <rect x=".5" y=".5" width="15" height="15" fill="#eee" stroke="#777" />
            <path d="M8 3v3M8 10v3M3 8h3M10 8h3M4.500 4.500l2 2M9.500 9.500l2 2M11.500 4.500l-2 2M6.500 9.500l-2 2" stroke="#3fb56a" />
          </svg>
        </div>
        <div className="relative flex h-[33px] w-[114px] shrink-0 items-center rounded-t-[6px] border border-b-0 border-[#4a4a4a] bg-gradient-to-b from-[#6e6e6e] to-[#5f5f5f] pl-[6px] pt-[3px]">
          <span className="text-[17.5px] leading-none tracking-[0.3px] text-[#f2f4f8]">Page #1</span>
          <div className="absolute left-[91px] top-[8px] flex h-[13px] w-[13px] items-center justify-center bg-[#e2552f]">
            <svg width="7" height="7" viewBox="0 0 7 7"><path d="M.5.500l6 6M6.500.500l-6 6" stroke="#fff" strokeWidth="1.800" /></svg>
          </div>
        </div>
      </div>
      {/* body */}
      <div className="flex h-[795px] shrink-0">
        <aside className="mt-[5px] flex w-[98px] shrink-0 flex-col border-r border-[#3f3f3f] bg-gradient-to-r from-[#565656] via-[#666] to-[#585858]">
          <PanelHead title="Tools" eye="left-[9px]" x="left-[83px]" />
          <div className="flex flex-col gap-[5px] pt-[2px]">
            <Item icon={<HwI />} lines={["Hardware", "Setup"]} />
            <Item icon={<TriColor s={26} />} lines={["Data", "Summary"]} />
            <Item icon={<CalibI />} lines={["Calibration"]} />
            <Item icon={<CalcI />} lines={["Calculator"]} />
          </div>
        </aside>
        <div className="w-[52px] shrink-0" />
        <main className="relative mt-[10px] flex h-[778px] w-[1618px] shrink-0 bg-white pl-[29px] shadow-[2px_2px_0_#2e2e2e]">
          <TablePane />
          <GraphPane />
          <Annot cls="left-[110px] top-[42px] h-[66px] w-[231px] border-[#ed1c24]" />
          <Annot cls="left-[390px] top-[39px] h-[78px] w-[202px] border-[#00a2e8]" />
          <Annot cls="left-[635px] top-[254px] h-[188px] w-[54px] border-[#22b14c]" />
          <Annot cls="left-[1048px] top-[678px] h-[60px] w-[206px] border-[#a349a4]" />
        </main>
        <div className="w-[53px] shrink-0" />
        <aside className="mt-[5px] flex w-[98px] shrink-0 flex-col border-l border-[#3f3f3f] bg-[#5f5f5f]">
          <PanelHead title="Displays" eye="left-[17px]" x="left-[81px]" track="tracking-[0px]" />
          <div className="mx-[6px] mt-[7px] h-[728px] w-[83px] rounded-[12px] border border-[#3c3c3c] bg-gradient-to-r from-[#595959] via-[#6c6c6c] to-[#5c5c5c]">
            <div className="-mt-[10px] flex flex-col">
              <Item icon={<GraphI />} lines={["Graph"]} />
              <Item icon={<TableI />} lines={["Table"]} />
              <Item icon={<DigitsI />} lines={["Digits"]} />
              <Item icon={<ScopeI />} lines={["Scope"]} />
              <Item icon={<FftI />} lines={["FFT"]} />
              <Item icon={<MeterI />} lines={["Meter"]} />
              <Item icon={<BarI />} lines={["Bar Meter"]} />
              <Item icon={<HistI />} lines={["Histogram"]} />
              <Item icon={<VideoI />} lines={["Video", "Analysis"]} />
              <Item icon={<ImageI />} lines={["Image"]} />
              <Item icon={<MovieI />} lines={["Movie"]} />
              <Item icon={<span className="font-['Liberation_Sans',sans-serif] text-[30px] font-bold leading-none text-[#bd1420]">A</span>} lines={["Text Box"]} />
              <Item tight icon={<PencilI />} lines={["Text Entry", "Box"]} />
              <Item icon={<PlaceI />} lines={["Placeholder"]} />
            </div>
          </div>
        </aside>
      </div>
      {/* bottom */}
      <div className="flex h-[89px] shrink-0 border-t-2 border-[#3c3c3c] bg-gradient-to-b from-[#636363] to-[#5a5a5a] text-[14px] text-[#ececec]">
        <div className="w-[98px] shrink-0 border-r border-[#444]" />
        <div className="flex min-w-0 flex-1 items-start pl-[12px]">
          <div className="mt-[4px] flex w-[33px] shrink-0 flex-col items-center">
            <div className="flex h-[39px] w-[33px] items-center justify-center rounded-[5px] border border-[#7a7a7a] bg-[#484848]">
              <svg width="18" height="18" viewBox="0 0 18 18">
                <circle cx="6" cy="6" r="4.500" fill="#ee1c24" />
                <circle cx="12" cy="12" r="4.500" fill="#f3d9d9" stroke="#d05050" strokeDasharray="1 1" />
              </svg>
            </div>
            <svg width="14" height="18" viewBox="0 0 14 18" className="mt-[11px]">
              <path d="M3 0l9 6-9 6z" fill="#b5b5b5" />
              <path d="M1 15h12M7 13v4" stroke="#e5e5e5" />
            </svg>
          </div>
          <div className="ml-[3px] mt-[5px] flex h-[78px] w-[768px] shrink-0 items-start rounded-[12px] border border-[#555] bg-gradient-to-b from-[#6a6a6a] to-[#4f4f4f]">
            <div className="flex w-[75px] shrink-0 flex-col items-center">
              <div className="flex h-[34px] items-center">
                <div className="h-[22px] w-[22px] rounded-full bg-gradient-to-br from-[#8f8f8f] to-[#c9c9c9]" />
              </div>
              <div className="mt-[11px] leading-[16px]">Record</div>
            </div>
            <div className="relative flex w-[129px] shrink-0 flex-col items-center">
              <div className="flex h-[34px] items-center">
                <svg width="22" height="22" viewBox="0 0 22 22">
                  <circle cx="11" cy="11" r="10.500" fill="#efe6e2" />
                  <circle cx="11" cy="11" r="6.500" fill="none" stroke="#d24a36" strokeWidth="2.600" strokeDasharray="2.600 2.600" />
                </svg>
              </div>
              <div className="mt-[11px] whitespace-nowrap leading-[16px]">Continuous Mode</div>
              <div className="absolute left-[119px] top-[37px]"><Tri c="#f0f0f0" w={9} h={5} /></div>
            </div>
            <div className="ml-[13px] mt-px flex h-[74px] w-[189px] shrink-0 flex-col rounded-[9px] border border-[#444] bg-[#4b4b4b] px-[2px] pt-[2px]">
              <div className="mx-px h-[9px] shrink-0 rounded-t-[6px] bg-gradient-to-b from-[#c0c0c0] to-[#6a6a6a]" />
              <div className="flex h-[38px] shrink-0 items-center justify-center pb-[2px] text-[31px] leading-none text-[#dcdcdc]">00:00.00</div>
              <div className="h-[20px] shrink-0 rounded-[3px] bg-[#363636]" />
            </div>
            <div className="ml-[10px] mt-[15px] flex h-[47px] w-[246px] shrink-0 items-center rounded-[12px] border border-[#7c7c7c] bg-gradient-to-b from-[#666] to-[#585858] pl-[3px]">
              <div className="flex h-[24px] w-[144px] shrink-0 items-center rounded-[12px] bg-gradient-to-b from-[#5e5e5e] to-[#2c2c2c] pl-[15px] text-[15.5px] leading-none text-white">
                Common Rate
                <span className="ml-[3px]"><Tri c="#fff" w={9} h={5} /></span>
              </div>
              <div className="ml-[7px] flex h-[24px] w-[69px] shrink-0 items-center rounded-[3px] border border-[#7a7a7a] pl-[4px] text-[15.5px] leading-none text-[#eee]">-- Hz</div>
              <div className="flex h-[24px] w-[13px] shrink-0 flex-col items-center justify-around bg-[#333]">
                <svg width="10" height="6" viewBox="0 0 10 6"><path d="M0 6L5 0l5 6z" fill="#fff" /></svg>
                <Tri c="#fff" w={10} h={6} />
              </div>
            </div>
            <div className="flex w-[105px] shrink-0 flex-col items-center">
              <div className="flex h-[34px] items-center">
                <svg width="20" height="21" viewBox="0 0 20 21">
                  <rect x="0" y="0" width="8" height="20" fill="#555" />
                  <circle cx="4" cy="4" r="2" fill="#c83a2a" />
                  <circle cx="4" cy="10" r="2" fill="#e8d830" />
                  <circle cx="4" cy="16" r="2" fill="#3aa04a" />
                  <circle cx="13" cy="11" r="7" fill="#eee" stroke="#5577aa" />
                  <path d="M13 6v5l3 1" stroke="#c06030" fill="none" />
                </svg>
              </div>
              <div className="mt-[3px] text-center leading-[16px]">Recording<br />Conditions</div>
            </div>
          </div>
          <div className="relative ml-[24px] mt-[24px] flex w-[110px] shrink-0 flex-col items-center">
            <svg width="24" height="24" viewBox="0 0 24 24" className="block">
              <path d="M10 2L2 16h13L10 2zm0 6l2 5H7z" fill="#9c9c9c" fillRule="evenodd" />
              <path d="M9 13l11 9M20 12L9 22" stroke="#b5b5b5" strokeWidth="3" />
            </svg>
            <div className="mt-[3px] whitespace-nowrap leading-[16px]">Delete Last Run</div>
            <div className="absolute left-[113px] top-[18px]">
              <svg width="9" height="6" viewBox="0 0 9 6"><path d="M.5.500h8L4.500 5.500z" fill="none" stroke="#aaa" /></svg>
            </div>
          </div>
          <div className="relative ml-auto h-[40px] w-[97px] shrink-0 rounded-bl-[16px] border-b border-[#8a8a8a] bg-[#454545]">
            <div className="absolute left-[7px] top-[2px] text-[14px] font-bold leading-[18px] tracking-[0.3px] text-[#f4f4f4]">Controls</div>
            <div className="absolute left-[82px] top-[6px]"><Xmark /></div>
            <div className="absolute left-[33px] top-[26px]"><SmallEye /></div>
          </div>
        </div>
        <div className="w-[98px] shrink-0 border-l border-[#444]" />
      </div>
    </div>
  );
}
